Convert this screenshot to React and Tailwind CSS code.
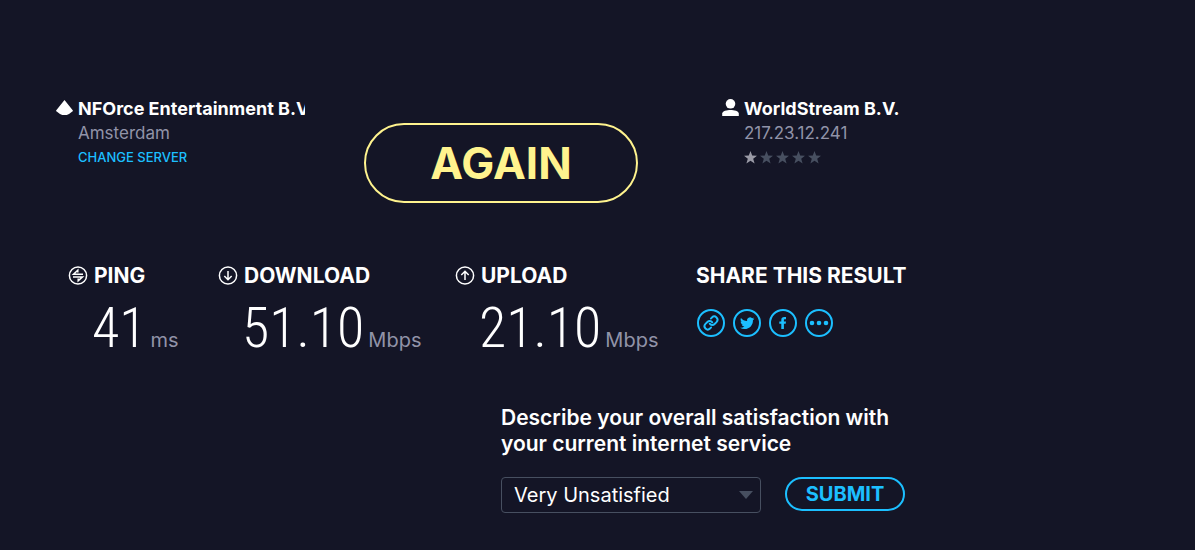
import { useState } from 'react'
import clsx from 'clsx'

const SATISFACTION_LEVELS = [
  'Very Unsatisfied',
  'Unsatisfied',
  'Neutral',
  'Satisfied',
  'Very Satisfied'
]

const STAR_PATH = 'M6.5 0 8.2 4.6 13 4.7 9.2 7.7 10.6 12.5 6.5 9.7 2.4 12.5 3.8 7.7 0 4.7 4.8 4.6Z'

function ServerIcon() {
  return (
    <svg viewBox="0 0 18 18" className="mt-0.5 h-[18px] w-[18px] shrink-0" fill="#fff" aria-hidden="true">
      <path d="M8.5 1 16.7 11.2Q17.3 12 16.3 12.6L13 14.9Q8.5 17.3 4 14.9L.7 12.6Q-.3 12 .3 11.2Z" />
    </svg>
  )
}

function UserIcon() {
  return (
    <svg viewBox="0 0 18 18" className="mt-0.5 h-[18px] w-[18px] shrink-0" fill="#fff" aria-hidden="true">
      <circle cx="8.5" cy="4.8" r="4.8" />
      <path d="M.2 17V14.6C.2 12 5 11 8.5 11S16.8 12 16.8 14.6V17Z" />
    </svg>
  )
}

function CircleIcon({ children }) {
  return (
    <svg viewBox="0 0 20 20" className="h-5 w-5 shrink-0" fill="none" stroke="#fff" strokeWidth="1.5" aria-hidden="true">
      <circle cx="10" cy="9.5" r="8.6" />
      {children}
    </svg>
  )
}

function Result({ icon, label, value, unit }) {
  return (
    <div>
      <h2 className="flex items-center gap-1.5 text-[21px] leading-6 font-bold">
        <CircleIcon>{icon}</CircleIcon>
        {label}
      </h2>
      <p className="flex items-baseline gap-1 pl-6 leading-20">
        <span className="font-['Roboto_Condensed','Liberation_Sans_Narrow',sans-serif] text-[56px] font-light">
          {value}
        </span>
        <span className="text-xl text-[#9193a8]">{unit}</span>
      </p>
    </div>
  )
}

function Rating({ score }) {
  return (
    <div className="flex h-6 items-center gap-[3px]" role="img" aria-label={`${score} out of 5 stars`}>
      {[1, 2, 3, 4, 5].map(n => (
        <svg
          key={n}
          viewBox="0 0 13 13"
          className={clsx('h-[13px] w-[13px]', n <= score ? 'fill-[#9a9aa6]' : 'fill-[#474f60]')}
        >
          <path d={STAR_PATH} />
        </svg>
      ))}
    </div>
  )
}

function ShareLink({ label, children }) {
  return (
    <a href="#share" aria-label={label} className="text-[#1cbfff] hover:text-white">
      <svg viewBox="0 0 28 28" className="h-7 w-7" fill="none" stroke="currentColor" strokeWidth="2">
        <circle cx="14" cy="14" r="13" />
        {children}
      </svg>
    </a>
  )
}

export default function App() {
  const [satisfaction, setSatisfaction] = useState(SATISFACTION_LEVELS[0])

  return (
    <main className="min-h-screen bg-[#141526] px-14 pt-[97px] pb-9 font-[Inter,sans-serif] text-white">
      <div className="max-w-[849px]">
        {/* Server, restart button and client */}
        <section className="grid grid-cols-[249px_1fr_183px] gap-x-[59px]">
          <div className="flex gap-1">
            <ServerIcon />
            <div className="min-w-0">
              <h2 className="overflow-hidden text-lg leading-6 font-bold whitespace-nowrap">
                NFOrce Entertainment B.V.
              </h2>
              <p className="text-[17px] leading-6 text-[#9193a8]">Amsterdam</p>
              <a href="#servers" className="block text-[13px] leading-6 font-medium text-[#1cbfff]">
                CHANGE SERVER
              </a>
            </div>
          </div>

          <button className="mt-[26px] h-20 w-[274px] rounded-full border-2 border-[#fff38e] text-[44px] font-bold text-[#fff38e]">
            AGAIN
          </button>

          <div className="flex gap-1">
            <UserIcon />
            <div>
              <h2 className="text-lg leading-6 font-bold whitespace-nowrap">WorldStream B.V.</h2>
              <p className="text-[17px] leading-6 text-[#9193a8]">217.23.12.241</p>
              <Rating score={1} />
            </div>
          </div>
        </section>

        {/* Results */}
        <section className="grid grid-cols-[150px_237px_1fr_209px] pt-[61px] pl-3">
          <Result
            label="PING"
            value="41"
            unit="ms"
            icon={<path d="M15 8.2H5.5L9.8 4.2V6.5M5 10.9H14.5L10.2 14.9V12.6" />}
          />
          <Result
            label="DOWNLOAD"
            value="51.10"
            unit="Mbps"
            icon={<path d="M10 5V13.5M6.3 10 10 13.7 13.7 10" />}
          />
          <Result
            label="UPLOAD"
            value="21.10"
            unit="Mbps"
            icon={<path d="M10 14V5.5M6.3 9 10 5.3 13.7 9" />}
          />
          <div>
            <h2 className="text-[21px] leading-6 font-bold whitespace-nowrap">SHARE THIS RESULT</h2>
            <div className="flex gap-2 pt-[21px] pl-px">
              <ShareLink label="Copy link">
                <g transform="translate(6.2 6.2) scale(.65)" strokeWidth="2.9" strokeLinecap="round">
                  <path d="M10 13a5 5 0 0 0 7.54.54l3-3a5 5 0 0 0-7.07-7.07l-1.72 1.71" />
                  <path d="M14 11a5 5 0 0 0-7.54-.54l-3 3a5 5 0 0 0 7.07 7.07l1.71-1.71" />
                </g>
              </ShareLink>
              <ShareLink label="Twitter">
                <path
                  transform="translate(7 7) scale(.6)"
                  fill="currentColor"
                  stroke="none"
                  d="M23.95 4.57a10 10 0 0 1-2.82.77 4.96 4.96 0 0 0 2.16-2.72c-.95.55-2 .95-3.13 1.18a4.92 4.92 0 0 0-8.38 4.48C7.69 8.1 4.07 6.13 1.64 3.16a4.82 4.82 0 0 0-.67 2.48c0 1.71.87 3.21 2.19 4.1a4.9 4.9 0 0 1-2.23-.62v.06a4.92 4.92 0 0 0 3.95 4.83 5 5 0 0 1-2.21.08 4.94 4.94 0 0 0 4.6 3.42A9.87 9.87 0 0 1 0 19.54a14 14 0 0 0 7.55 2.21c9.05 0 14-7.5 14-13.98 0-.21 0-.42-.02-.63a9.94 9.94 0 0 0 2.46-2.55z"
                />
              </ShareLink>
              <ShareLink label="Facebook">
                <path
                  fill="currentColor"
                  stroke="none"
                  d="M12.3 20V14.7H10.3V12.4H12.3V10.9C12.3 8.9 13.4 8 15.2 8H17V10.2H16C15.2 10.2 14.9 10.5 14.9 11.2V12.4H17L16.7 14.7H14.9V20Z"
                />
              </ShareLink>
              <ShareLink label="More options">
                <g fill="currentColor" stroke="none">
                  <circle cx="7" cy="14" r="2.3" />
                  <circle cx="14" cy="14" r="2.3" />
                  <circle cx="21" cy="14" r="2.3" />
                </g>
              </ShareLink>
            </div>
          </div>
        </section>

        {/* Survey */}
        <form className="ml-auto max-w-[404px] pt-[37px]" onSubmit={e => e.preventDefault()}>
          <label htmlFor="satisfaction" className="block text-[21px] leading-[26px] font-semibold">
            Describe your overall satisfaction with your current internet service
          </label>
          <div className="flex items-start gap-6 pt-5">
            <div className="relative flex-1">
              <select
                id="satisfaction"
                value={satisfaction}
                onChange={e => setSatisfaction(e.target.value)}
                className="h-9 w-full appearance-none rounded border border-[#474f60] bg-[#141526] px-3 text-xl leading-6"
              >
                {SATISFACTION_LEVELS.map(level => (
                  <option key={level}>{level}</option>
                ))}
              </select>
              <svg
                viewBox="0 0 14 8"
                className="pointer-events-none absolute top-3.5 right-2 h-2 w-3.5"
                fill="#474f60"
                aria-hidden="true"
              >
                <path d="M0 0H14L7 8Z" />
              </svg>
            </div>
            <button
              type="submit"
              className="h-[34px] w-[120px] rounded-full border-2 border-[#1cbfff] text-xl leading-6 font-bold text-[#1cbfff]"
            >
              SUBMIT
            </button>
          </div>
        </form>
      </div>
    </main>
  )
}
